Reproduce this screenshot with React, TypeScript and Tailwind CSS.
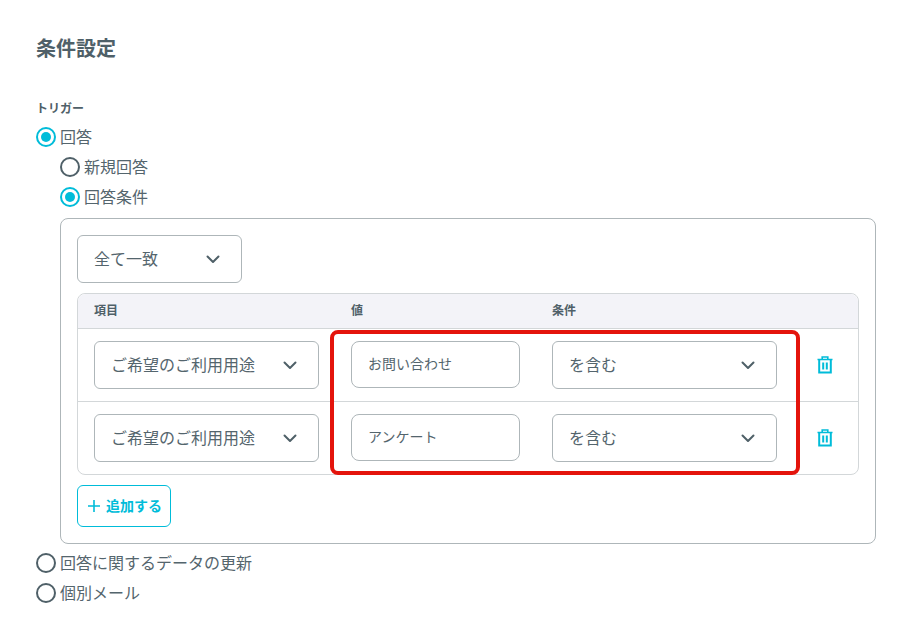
import React from "react";

const font = { fontFamily: '"Noto Sans CJK JP", "Noto Sans", sans-serif' };

function Chevron() {
  return (
    <svg width="14" height="9" viewBox="0 0 14 9" fill="none" className="shrink-0">
      <path d="M1.5 1.5 L7 7 L12.5 1.5" stroke="#4f6068" strokeWidth="2" strokeLinecap="round" strokeLinejoin="round" />
    </svg>
  );
}

function Trash() {
  return (
    <svg width="16" height="18" viewBox="0 0 16 18" fill="none">
      <path d="M0.5 3.5H15.5M5.2 3V1H10.8V3" stroke="#00bcd9" strokeWidth="1.6" />
      <path d="M2.2 3.5V16.6H13.8V3.5" stroke="#00bcd9" strokeWidth="2" />
      <path d="M6.2 6.5V13.5M9.8 6.5V13.5" stroke="#00bcd9" strokeWidth="2" />
    </svg>
  );
}

function Radio({ checked, label }: { checked?: boolean; label: string }) {
  return (
    <div className="flex h-[30px] items-center gap-[4px]">
      <span
        className={`flex h-[20px] w-[20px] items-center justify-center rounded-full border-2 ${
          checked ? "border-[#00bcd9]" : "border-[#4f6068]"
        }`}
      >
        {checked && <span className="h-[10px] w-[10px] rounded-full bg-[#00bcd9]" />}
      </span>
      <span className="mb-[2px] text-[16px] leading-[24px] text-[#54656d]">{label}</span>
    </div>
  );
}

function Select({ label, className }: { label: string; className: string }) {
  return (
    <div
      className={`flex h-[48px] shrink-0 items-center justify-between rounded-[6px] border border-[#aeb6b9] bg-white pl-[16px] pr-[21px] text-[16px] text-[#54656d] ${className}`}
    >
      <span className="mb-[2px]">{label}</span>
      <Chevron />
    </div>
  );
}

function Row({ value, last }: { value: string; last?: boolean }) {
  return (
    <div className={`flex items-center pl-[16px] ${last ? "h-[72px]" : "h-[73px] border-b border-[#d3d7d9]"}`}>
      <Select label="ご希望のご利用用途" className="w-[225px]" />
      <div className="mb-px ml-[32px] flex h-[47px] w-[169px] shrink-0 items-center rounded-[8px] border border-[#aeb6b9] pl-[16px] text-[14px] text-[#54656d]">
        <span className="mb-[2px]">{value}</span>
      </div>
      <Select label="を含む" className="ml-[32px] w-[225px]" />
      <div className="ml-[39px] flex w-[18px] justify-center">
        <Trash />
      </div>
    </div>
  );
}

export default function App() {
  return (
    <div className="h-[628px] w-[913px] overflow-hidden bg-white pl-[36px] pr-[37px] pt-[34px]" style={font}>
      <h1 className="h-[28px] text-[20px] font-bold leading-[28px] text-[#4f6068]">条件設定</h1>
      <div className="mt-[36px] h-[20px] text-[12px] font-bold leading-[20px] text-[#4f6068]">トリガー</div>
      <div className="mt-[4px]">
        <Radio checked label="回答" />
        <div className="pl-[24px]">
          <Radio label="新規回答" />
          <Radio checked label="回答条件" />
          <div className="mt-[6px] rounded-[8px] border border-[#aeb6b9] p-[16px]">
            <Select label="全て一致" className="w-[165px]" />
            <div className="relative mt-[10px] w-[782px] rounded-[8px] border border-[#d3d7d9]">
              <div className="flex h-[35px] items-center rounded-t-[8px] border-b border-[#d3d7d9] bg-[#f3f3f8] pb-[2px] pl-[16px] text-[12px] font-bold text-[#4f6068]">
                <span className="w-[257px]">項目</span>
                <span className="w-[201px]">値</span>
                <span>条件</span>
              </div>
              <Row value="お問い合わせ" />
              <Row value="アンケート" last />
              <div className="absolute left-[252px] top-[36px] h-[145px] w-[470px] rounded-[8px] border-[4px] border-[#e4140c]" />
            </div>
            <button className="mt-[10px] flex h-[42px] w-[94px] items-center gap-[6px] rounded-[6px] border border-[#00bcd9] pl-[10px] text-[14px] font-bold text-[#00bcd9]">
              <svg width="12" height="12" viewBox="0 0 12 12" fill="none">
                <path d="M6 0V12M0 6H12" stroke="#00bcd9" strokeWidth="1.6" />
              </svg>
              <span className="mb-[2px]">追加する</span>
            </button>
          </div>
        </div>
        <div className="mt-[4px]">
          <Radio label="回答に関するデータの更新" />
          <Radio label="個別メール" />
        </div>
      </div>
    </div>
  );
}
